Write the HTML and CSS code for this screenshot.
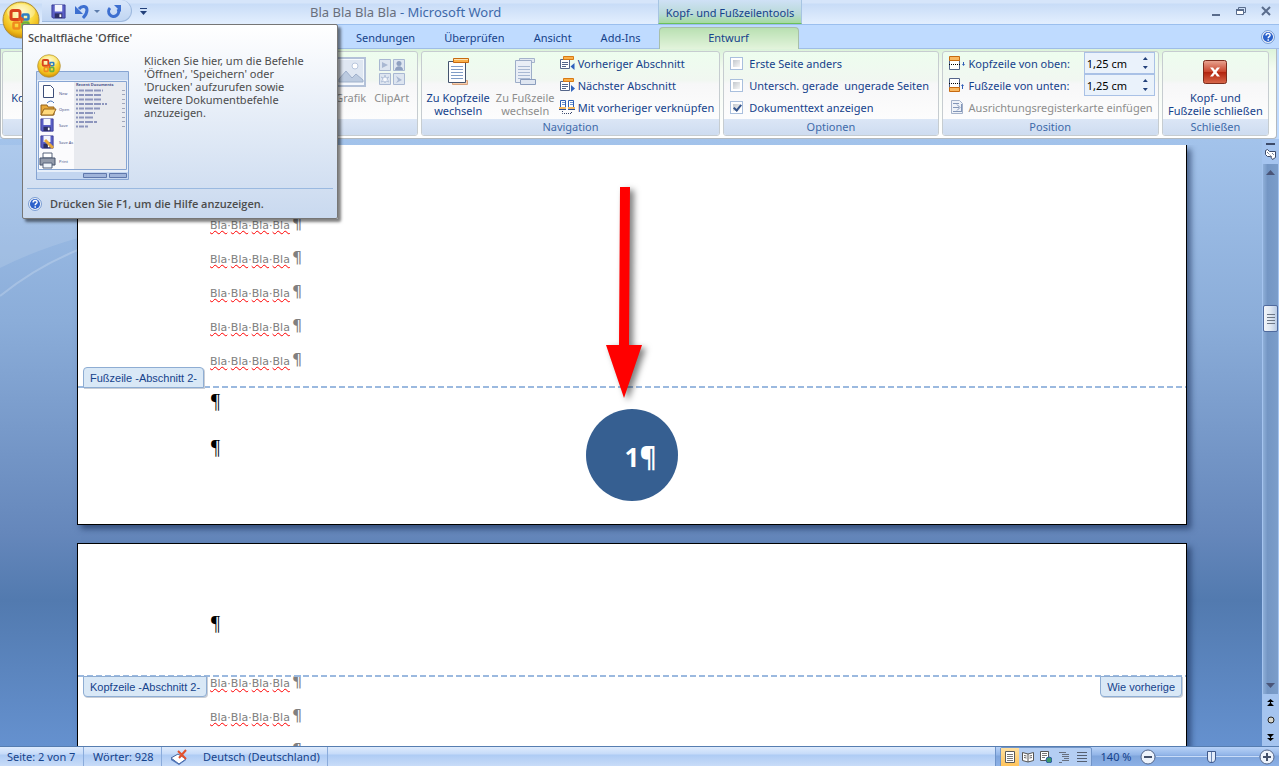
FILE: index.html
```html
<!DOCTYPE html>
<html lang="de">
<head>
    <meta charset="UTF-8">
    <meta name="viewport" content="width=device-width, initial-scale=1.0">
    <title>Bla Bla Bla Bla - Microsoft Word</title>
    <link rel="stylesheet" href="styles.css">
</head>
<body>
    <!-- Gemeinsame Symbole -->
    <svg class="symbols" aria-hidden="true">
        <defs>
            <radialGradient id="gold" cx="50%" cy="30%" r="70%">
                <stop offset="0" stop-color="#fffbd0"/>
                <stop offset="0.45" stop-color="#fbe04a"/>
                <stop offset="0.8" stop-color="#eeb816"/>
                <stop offset="1" stop-color="#c98a08"/>
            </radialGradient>
            <linearGradient id="red" x1="0" y1="0" x2="0" y2="1">
                <stop offset="0" stop-color="#e9a592"/>
                <stop offset="0.5" stop-color="#c8432a"/>
                <stop offset="0.52" stop-color="#b32610"/>
                <stop offset="1" stop-color="#d8694c"/>
            </linearGradient>
            <symbol id="i-office" viewBox="0 0 38 38">
                <circle cx="19" cy="19" r="18" fill="url(#gold)" stroke="#a98a3c"/>
                <ellipse cx="19" cy="11" rx="14" ry="8" fill="#fff" opacity="0.3"/>
                <g fill="none" stroke-width="3">
                    <rect x="9" y="9.500" width="9" height="9" rx="2" stroke="#d8421c"/>
                    <rect x="20.500" y="13.500" width="6" height="5" rx="1" stroke="#2f7fc4" stroke-width="2.500"/>
                    <rect x="11.500" y="21.500" width="6" height="6" rx="1" stroke="#f08a1c" stroke-width="2.500"/>
                    <rect x="20.500" y="21.500" width="6" height="6" rx="1" stroke="#6cb13a" stroke-width="2.500"/>
                </g>
                <path d="M16 18.500h6M19.500 16v6" stroke="#e2571f" stroke-width="2"/>
            </symbol>
            <symbol id="i-save" viewBox="0 0 16 16">
                <path d="M1 1h14v14H2L1 14z" fill="#5a5fc6" stroke="#3a3c94"/>
                <path d="M4 1h8v7H4z" fill="#f4f6fc"/>
                <path d="M4 10h8v5H4z" fill="#2c2f63"/>
                <path d="M9 11h2v3H9z" fill="#fff"/>
            </symbol>
            <symbol id="i-help" viewBox="0 0 16 16">
                <circle cx="8" cy="8" r="7.300" fill="#fff" stroke="#5b86c8"/>
                <circle cx="8" cy="8" r="5.800" fill="#2c62cb"/>
                <path d="M5.800 6.300c0-3 4.600-3 4.600-.3 0 1.700-2.200 1.500-2.200 3.400" fill="none" stroke="#fff" stroke-width="1.600"/>
                <path d="M7.400 10.700h1.700v1.600H7.400z" fill="#fff"/>
            </symbol>
            <symbol id="i-page-head" viewBox="0 0 24 30">
                <path d="M6.500 23.500h15v4h-15z" fill="#f8cfae" stroke="#d8a27c"/>
                <path d="M2.500 4.500h17v21h-17z" fill="#fdfeff" stroke="#44546f"/>
                <path d="M5 9.500h12M5 12.500h12M5 15.500h12M5 18.500h12M5 21.500h12" stroke="#7f9cc6"/>
                <path d="M7.500 1.500h15v4h-15z" fill="#f9b04a" stroke="#c66a10"/>
                <path d="M8 2.500h14" stroke="#fde0b0"/>
            </symbol>
            <symbol id="i-page-foot" viewBox="0 0 24 30">
                <path d="M6.500 1.500h15v4h-15z" fill="#e3e9f2" stroke="#a5b3cb"/>
                <path d="M2.500 3.500h16v22h-16z" fill="#e9eef6" stroke="#9dadc8"/>
                <path d="M5 9.500h12M5 12.500h12M5 15.500h12M5 18.500h12M5 21.500h12" stroke="#a9b9d3"/>
                <path d="M7.500 22.500h15v5h-15z" fill="#dfe6f1" stroke="#8b9dbd"/>
            </symbol>
            <symbol id="i-section" viewBox="0 0 16 16">
                <path d="M1.500 4.500h9v9h-9z" fill="#fff" stroke="#54658a"/>
                <path d="M3 7.500h6M3 9.500h6M3 11.500h4" stroke="#54658a"/>
                <path d="M4.500 1.500h10v3h-10z" fill="#f9b04a" stroke="#d87a14"/>
            </symbol>
            <symbol id="i-prev" viewBox="0 0 16 16">
                <use href="#i-section"/>
                <path d="M15.500 8v7L11.500 11.500z" fill="#2f62bd"/>
            </symbol>
            <symbol id="i-next" viewBox="0 0 16 16">
                <use href="#i-section"/>
                <path d="M12 8v7l4-3.500z" fill="#2f62bd"/>
            </symbol>
            <symbol id="i-link" viewBox="0 0 16 16">
                <path d="M1.500 1.500h5v7h-5zM9.500 1.500h5v7h-5z" fill="#fff" stroke="#2e5fb4"/>
                <path d="M3 3.500h3M3 5.500h3M11 3.500h3M11 5.500h3" stroke="#6f93cf"/>
                <path d="M0 8h7v2H0zM9 8h7v2H9z" fill="#f5b860"/>
                <path d="M0 10.500h7M9 10.500h7" stroke="#2e4f94"/>
                <path d="M3.500 12v2.500h9V12" fill="none" stroke="#39466b" stroke-dasharray="1 1"/>
            </symbol>
            <symbol id="i-top" viewBox="0 0 16 16">
                <path d="M.5 5.500h10v9H.5z" fill="#fff" stroke="#54658a"/>
                <path d="M.5 1.500h10v4H.5z" fill="#f9b860" stroke="#c66a10"/>
                <path d="M0 9.500h12" stroke="#000" stroke-dasharray="1 1"/>
                <path d="M14.500 7v3" stroke="#2d5bb5"/><path d="M13 9h3l-1.500 2z" fill="#2d5bb5"/>
            </symbol>
            <symbol id="i-bottom" viewBox="0 0 16 16">
                <path d="M.5 1.500h10v9H.5z" fill="#fff" stroke="#54658a"/>
                <path d="M.5 10.500h10v4H.5z" fill="#f9b860" stroke="#c66a10"/>
                <path d="M0 6.500h12" stroke="#000" stroke-dasharray="1 1"/>
                <path d="M13.500 8v4" stroke="#2d5bb5"/><path d="M12 9h3l-1.500-2z" fill="#2d5bb5"/>
            </symbol>
            <symbol id="i-align" viewBox="0 0 16 16">
                <path d="M2.500 1.500h8l3 3v10h-11z" fill="#eef2f8" stroke="#a3b1c9"/>
                <path d="M4 4.500h6M4 12.500h8M4 8.500h6M8 5.500l3 3-3 3M12.500 5v8" fill="none" stroke="#8396b8"/>
            </symbol>
            <symbol id="i-close" viewBox="0 0 24 24">
                <rect x=".5" y=".5" width="23" height="23" rx="2" fill="url(#red)" stroke="#7b2c1d"/>
                <path d="M7 7.500h3l2 2.800 2-2.800h3L13.500 12l3.500 4.500h-3l-2-2.800-2 2.800H7l3.500-4.500z" fill="#fff"/>
            </symbol>
            <symbol id="i-picture" viewBox="0 0 30 30">
                <rect x="1" y="1" width="28" height="28" fill="#f4f8fd" stroke="#b3c1d8" stroke-width="2"/>
                <path d="M3 3h24v22H3z" fill="#dfe7f2"/>
                <path d="M3 22l7-8 6 7 4-4 7 6v2H3z" fill="#bccbe0" stroke="#9fb0cb"/>
                <circle cx="19" cy="9" r="3" fill="#fff" stroke="#b9c7dd"/>
            </symbol>
            <symbol id="i-clipart" viewBox="0 0 26 26">
                <g fill="#dde5f0" stroke="#a9b8d2">
                    <path d="M.5.5h11v11H.5zM14.500.5h11v11h-11zM.5 14.500h11v11H.5zM14.500 14.500h11v11h-11z"/>
                </g>
                <path d="M3 3l6 3-6 3z" fill="#a9b8d2"/>
                <circle cx="20" cy="4.500" r="2.500" fill="#8ea0c0"/><path d="M16 11c0-5 8-5 8 0z" fill="#8ea0c0"/>
                <path d="M6 16l1 3 3-1-2 2 2 3-3-1-1 2-1-2-3 1 2-3-2-2 3 1z" fill="#f8fafd" stroke="#b5c3da"/>
                <path d="M17 17l6 4-6 3 2-3z" fill="#a9b8d2"/>
            </symbol>
        </defs>
    </svg>

    <!-- Titelleiste -->
    <header class="titlebar">
        <div class="quick">
            <button aria-label="Speichern"><svg width="15" height="15"><use href="#i-save"/></svg></button>
            <button aria-label="Rückgängig"><svg width="16" height="16" viewBox="0 0 16 16"><path d="M5 5c3-4 8-3 8 1 0 3-1 5-4 8" fill="none" stroke="#3d6fd0" stroke-width="3"/><path d="M1 2v8h8z" fill="#3d6fd0"/></svg></button>
            <button class="quick-drop" aria-label="Rückgängig-Liste"><svg width="6" height="4" viewBox="0 0 6 4"><path d="M0 0h6L3 3z" fill="#5c7cab"/></svg></button>
            <button aria-label="Wiederholen"><svg width="16" height="16" viewBox="0 0 16 16"><path d="M4 4a5 5 0 1 0 8 1" fill="none" stroke="#3d6fd0" stroke-width="3"/><path d="M8 1h7v7z" fill="#3d6fd0"/></svg></button>
        </div>
        <button class="quick-more" aria-label="Symbolleiste anpassen"><svg width="7" height="7" viewBox="0 0 7 7"><path d="M0 0h7v1H0zM0 3h7L3.500 7z" fill="#22407a"/></svg></button>
        <h1 class="title"><span>Bla Bla Bla Bla</span> - Microsoft Word</h1>
        <div class="context-title">Kopf- und Fußzeilentools</div>
        <div class="window-buttons">
            <button aria-label="Minimieren"><svg width="12" height="12" viewBox="0 0 12 12"><path d="M2 9h8v2H2z" fill="#596c8c"/></svg></button>
            <button aria-label="Wiederherstellen"><svg width="12" height="12" viewBox="0 0 12 12"><path d="M3.500 4V2.500h7v5H9" fill="none" stroke="#596c8c"/><path d="M1.500 4.500h7v5h-7z" fill="#fff" stroke="#596c8c"/><path d="M1 4h8v2H1z" fill="#596c8c"/></svg></button>
            <button aria-label="Schließen"><svg width="12" height="12" viewBox="0 0 12 12"><path d="M2 2l8 8M10 2l-8 8" stroke="#596c8c" stroke-width="2"/></svg></button>
        </div>
    </header>

    <!-- Registerkarten -->
    <nav class="tabs">
        <a href="#sendungen">Sendungen</a>
        <a href="#ueberpruefen">Überprüfen</a>
        <a href="#ansicht">Ansicht</a>
        <a href="#addins">Add-Ins</a>
        <a href="#entwurf" class="active">Entwurf</a>
        <button class="help" aria-label="Hilfe"><svg width="14" height="14"><use href="#i-help"/></svg></button>
    </nav>

    <!-- Multifunktionsleiste -->
    <section class="ribbon">
        <div class="group group-insert">
            <div class="group-body">
                <button class="big big-start">Ko</button>
                <button class="big big-picture" disabled><svg width="30" height="30"><use href="#i-picture"/></svg>Grafik</button>
                <button class="big big-clip" disabled><svg width="26" height="30"><use href="#i-clipart"/></svg>ClipArt</button>
            </div>
            <div class="group-name"></div>
        </div>
        <div class="group group-nav">
            <div class="group-body">
                <button class="big"><svg width="24" height="30"><use href="#i-page-head"/></svg>Zu Kopfzeile<br>wechseln</button>
                <button class="big" disabled><svg width="24" height="30"><use href="#i-page-foot"/></svg>Zu Fußzeile<br>wechseln</button>
                <div class="rows">
                    <button class="row"><svg width="16" height="16"><use href="#i-prev"/></svg>Vorheriger Abschnitt</button>
                    <button class="row"><svg width="16" height="16"><use href="#i-next"/></svg>Nächster Abschnitt</button>
                    <button class="row"><svg width="16" height="16"><use href="#i-link"/></svg>Mit vorheriger verknüpfen</button>
                </div>
            </div>
            <div class="group-name">Navigation</div>
        </div>
        <div class="group group-options">
            <div class="group-body">
                <div class="rows">
                    <label class="row"><input type="checkbox">Erste Seite anders</label>
                    <label class="row"><input type="checkbox">Untersch. gerade&nbsp; ungerade Seiten</label>
                    <label class="row"><input type="checkbox" checked>Dokumenttext anzeigen</label>
                </div>
            </div>
            <div class="group-name">Optionen</div>
        </div>
        <div class="group group-position">
            <div class="group-body">
                <div class="rows">
                    <div class="row">
                        <svg width="16" height="16"><use href="#i-top"/></svg>
                        <label for="top">Kopfzeile von oben:</label>
                        <div class="spin">
                            <input id="top" type="text" value="1,25 cm">
                            <div class="spin-buttons"><button class="up" aria-label="Mehr"></button><button class="down" aria-label="Weniger"></button></div>
                        </div>
                    </div>
                    <div class="row">
                        <svg width="16" height="16"><use href="#i-bottom"/></svg>
                        <label for="bottom">Fußzeile von unten:</label>
                        <div class="spin">
                            <input id="bottom" type="text" value="1,25 cm">
                            <div class="spin-buttons"><button class="up" aria-label="Mehr"></button><button class="down" aria-label="Weniger"></button></div>
                        </div>
                    </div>
                    <button class="row" disabled><svg width="16" height="16"><use href="#i-align"/></svg>Ausrichtungsregisterkarte einfügen</button>
                </div>
            </div>
            <div class="group-name">Position</div>
        </div>
        <div class="group group-close">
            <div class="group-body">
                <button class="big"><svg width="24" height="30"><use href="#i-close"/></svg>Kopf- und<br>Fußzeile schließen</button>
            </div>
            <div class="group-name">Schließen</div>
        </div>
    </section>

    <!-- Dokument -->
    <main class="workspace">
        <div class="desk">
            <svg class="swirl" width="78" height="160" viewBox="0 0 78 160" aria-hidden="true">
                <path d="M0 0h78v93Q36 105 0 123z" fill="#fff" opacity="0.12"/>
                <path d="M0 151Q36 122 78 105" fill="none" stroke="#fff" stroke-width="2" opacity="0.2"/>
            </svg>
            <article class="page page-first">
                <div class="text">
                    <p><span>Bla</span>·<span>Bla</span>·<span>Bla</span>·<span>Bla</span><b>¶</b></p>
                    <p><span>Bla</span>·<span>Bla</span>·<span>Bla</span>·<span>Bla</span><b>¶</b></p>
                    <p><span>Bla</span>·<span>Bla</span>·<span>Bla</span>·<span>Bla</span><b>¶</b></p>
                    <p><span>Bla</span>·<span>Bla</span>·<span>Bla</span>·<span>Bla</span><b>¶</b></p>
                    <p><span>Bla</span>·<span>Bla</span>·<span>Bla</span>·<span>Bla</span><b>¶</b></p>
                </div>
                <footer class="page-footer">
                    <div class="mark mark-footer">Fußzeile -Abschnitt 2-</div>
                    <p>¶</p>
                    <p>¶</p>
                    <div class="page-number">1¶</div>
                </footer>
                <svg class="arrow" width="60" height="224" viewBox="0 0 60 224" aria-hidden="true">
                    <path d="M20 2h10l-1 158h13L24 213 6 160h13z" fill="#f00"/>
                </svg>
            </article>
            <article class="page page-second">
                <header class="page-header">
                    <p>¶</p>
                    <div class="mark mark-header">Kopfzeile -Abschnitt 2-</div>
                    <div class="mark mark-header mark-right">Wie vorherige</div>
                </header>
                <div class="text">
                    <p><span>Bla</span>·<span>Bla</span>·<span>Bla</span>·<span>Bla</span><b>¶</b></p>
                    <p><span>Bla</span>·<span>Bla</span>·<span>Bla</span>·<span>Bla</span><b>¶</b></p>
                    <p><b class="last">¶</b></p>
                </div>
            </article>
        </div>
        <div class="scrollbar">
            <div class="split"></div>
            <button class="ruler" aria-label="Lineal"><svg width="13" height="13" viewBox="0 0 13 13"><path d="M1.500 2.500l2-1 2 2h6v6l-3 2-2-3h-3l-2-2z" fill="#fff" stroke="#3c4a69"/><path d="M3 4l5 5M8 5l2 2" stroke="#3c4a69" stroke-dasharray="1 1"/></svg></button>
            <div class="track">
                <button class="up" aria-label="Nach oben"></button>
                <div class="thumb"></div>
                <button class="down" aria-label="Nach unten"></button>
            </div>
            <button class="jump" aria-label="Vorherige Seite"><svg width="7" height="8" viewBox="0 0 7 8"><path d="M3.500 0L7 3H4v1l3 3H0l3-3V3H0z" fill="#000"/></svg></button>
            <button class="jump" aria-label="Browseobjekt"><svg width="8" height="8" viewBox="0 0 8 8"><circle cx="4" cy="4" r="3" fill="#d5d5cd" stroke="#222"/></svg></button>
            <button class="jump" aria-label="Nächste Seite"><svg width="7" height="8" viewBox="0 0 7 8"><path d="M3.500 8L0 5h3V4L0 1h7L4 4v1h3z" fill="#000"/></svg></button>
        </div>
    </main>

    <!-- Statusleiste -->
    <footer class="status">
        <div class="status-item status-page">Seite: 2 von 7</div>
        <div class="status-item status-words">Wörter: 928</div>
        <div class="status-item status-lang">
            <svg width="18" height="16" viewBox="0 0 18 16"><path d="M1 9l7-4 8 5-7 5z" fill="#fff" stroke="#44639c"/><path d="M1 9v2l8 5 7-5v-1l-7 5z" fill="#4f74b8"/><path d="M8 2l8 8M16 1L9 9" stroke="#e2502c" stroke-width="2"/></svg>
            Deutsch (Deutschland)
        </div>
        <div class="status-right">
            <div class="views">
                <button class="on" aria-label="Seitenlayout"><svg width="12" height="12" viewBox="0 0 12 12"><path d="M1.500.5h9v11h-9z" fill="#fff" stroke="#5a5a5a"/><path d="M3 3.500h6M3 5.500h6M3 7.500h6M3 9.500h6" stroke="#777"/></svg></button>
                <button aria-label="Vollbild-Lesemodus"><svg width="12" height="12" viewBox="0 0 12 12"><path d="M.5 1.500L6 3l5.500-1.500v8L6 11 .5 9.500zM6 3v8" fill="#fff" stroke="#555"/><path d="M2 4.500l2.500.5M2 6.500l2.500.5M7.500 5l2.500-.5M7.500 7l2.500-.5" stroke="#666"/></svg></button>
                <button aria-label="Weblayout"><svg width="12" height="12" viewBox="0 0 12 12"><path d="M.5.5h8v9h-8z" fill="#fff" stroke="#555"/><path d="M2 2.500h5M2 4.500h5M2 6.500h3" stroke="#777"/><circle cx="9" cy="9" r="3" fill="#3d9a6a" stroke="#2c5ba8"/></svg></button>
                <button aria-label="Gliederung"><svg width="12" height="12" viewBox="0 0 12 12"><path d="M1 1.500h7M4 3.500h7M4 5.500h7M6 7.500h5M4 9.500h7M1 11.500h3" stroke="#666f80"/></svg></button>
                <button aria-label="Entwurf"><svg width="12" height="12" viewBox="0 0 12 12"><path d="M1 1.500h10M1 4.500h10M1 7.500h10M1 10.500h10" stroke="#555f70"/></svg></button>
            </div>
            <button class="zoom-value">140 %</button>
            <button class="zoom-button" aria-label="Verkleinern"><svg width="16" height="16" viewBox="0 0 16 16"><circle cx="8" cy="8" r="7" fill="#edf3fc" stroke="#54668a"/><path d="M4 7h8v2H4z" fill="#44516b"/></svg></button>
            <input class="zoom" type="range" min="0" max="100" value="54" aria-label="Zoom">
            <button class="zoom-button" aria-label="Vergrößern"><svg width="16" height="16" viewBox="0 0 16 16"><circle cx="8" cy="8" r="7" fill="#edf3fc" stroke="#54668a"/><path d="M4 7h8v2H4zM7 4h2v8H7z" fill="#44516b"/></svg></button>
        </div>
    </footer>

    <!-- Office-Schaltfläche mit QuickInfo -->
    <button class="office" aria-label="Office"><svg width="38" height="38"><use href="#i-office"/></svg></button>
    <aside class="tooltip">
        <h2>Schaltfläche 'Office'</h2>
        <div class="tooltip-body">
            <svg class="preview" width="96" height="127" viewBox="0 0 96 127" aria-hidden="true">
                <path d="M1.500 17.500h92v108h-92z" fill="#e6effa" stroke="#86a4d2"/>
                <path d="M2 18h91v8H2zM2 118h91v7H2z" fill="#c3d6f0"/>
                <path d="M3.500 27.500h88v88h-88z" fill="#fbfbfd" stroke="#86a4d2"/>
                <path d="M39 28h52v87H39z" fill="#e8eaef"/>
                <path d="M8.500 31.500h7l3 3v9h-10z" fill="#fff" stroke="#3c4d78"/>
                <path d="M6 51h6l1 2h6v8H6z" fill="#e8a93c" stroke="#94621a"/><path d="M9 55h12l-3 6H6z" fill="#ffd97c" stroke="#94621a"/><path d="M12 49q4-4 7 0" fill="none" stroke="#4470b8"/>
                <use href="#i-save" x="5" y="64" width="14" height="14"/>
                <use href="#i-save" x="5" y="81" width="14" height="14"/><path d="M10 86l8 8" stroke="#e8a93c" stroke-width="3"/>
                <path d="M8 99h9v5H8z" fill="#fff" stroke="#56627a"/><path d="M5 104h15v7H5z" fill="#939bab" stroke="#47526a"/><path d="M8 109h9v5H8z" fill="#eef3fa" stroke="#56627a"/>
                <g class="preview-text">
                    <text x="24" y="41">New</text><text x="24" y="57">Open</text><text x="24" y="73">Save</text><text x="24" y="90">Save As</text><text x="24" y="109">Print</text>
                    <text class="preview-head" x="41" y="32">Recent Documents</text>
                </g>
                <g stroke="#8d96bd" stroke-width="2" stroke-dasharray="2 1 5 1 8 1 7 1">
                    <path d="M41 36.500h27M41 41h25M41 45.500h25M41 50h31M41 54.500h24M41 59h19M41 63.500h17M41 68h21M41 72.500h12"/>
                </g>
                <path d="M87 36.500h3M87 40.500h3M87 45.500h3M87 49.500h3M87 54.500h3M87 58.500h3M87 63.500h3M87 67.500h3M87 72.500h3" stroke="#a0a6ba"/>
                <path d="M48.500 119.500h23v4h-23zM74.500 119.500h17v4h-17z" fill="#9fb4da" stroke="#5f78ac"/>
                <use href="#i-office" x="2" y="0" width="24" height="24"/>
            </svg>
            <p>Klicken Sie hier, um die Befehle<br>'Öffnen', 'Speichern' oder<br>'Drucken' aufzurufen sowie<br>weitere Dokumentbefehle<br>anzuzeigen.</p>
        </div>
        <div class="tooltip-help">
            <svg width="14" height="14"><use href="#i-help"/></svg>
            <strong>Drücken Sie F1, um die Hilfe anzuzeigen.</strong>
        </div>
    </aside>
</body>
</html>
```
FILE: styles.css
```css
* {
    box-sizing: border-box;
}

body {
    margin: 0;
    height: 100vh;
    display: flex;
    flex-direction: column;
    overflow: hidden;
    position: relative;
    background: #bfdbff;
    font-family: "Noto Sans", sans-serif;
    font-size: 11px;
    line-height: 13px;
    color: #15428b;
}

button {
    margin: 0;
    padding: 0;
    border: none;
    background: none;
    font: inherit;
    color: inherit;
}

p {
    margin: 0;
}

svg {
    display: block;
    flex: none;
}

.symbols {
    position: absolute;
    width: 0;
    height: 0;
}

/* Titelleiste */
.titlebar {
    flex: none;
    display: flex;
    align-items: stretch;
    height: 25px;
    padding-left: 42px;
    border-bottom: 1px solid #9bbfee;
    background: linear-gradient(#d6e5fa 0, #d6e5fa 3px, #c8dcf7 4px, #e2eefe 23px);
}

.quick {
    display: flex;
    align-items: center;
    gap: 8px;
    width: 90px;
    height: 22px;
    padding: 2px 0 0 9px;
    border: 1px solid #9db9de;
    border-top: none;
    border-left: none;
    border-radius: 0 11px 11px 0;
    background: linear-gradient(#d9e7fb, #c0d5f2);
}

.quick-drop {
    margin: 0 -2px 0 -4px;
}

.quick-more {
    width: 22px;
    padding: 0 0 2px 8px;
}

.title {
    width: 504px;
    margin: 0;
    padding-left: 156px;
    font-size: 13px;
    line-height: 25px;
    font-weight: normal;
    color: #3e6aaa;
}

.title span {
    color: #696f7c;
}

.context-title {
    width: 144px;
    border: 1px solid #a6c4e2;
    border-width: 0 1px;
    border-bottom: 1px solid #6cc05a;
    background: linear-gradient(#cfe1f6, #b9dad8 60%, #a5dba0);
    line-height: 26px;
    text-align: center;
}

.window-buttons {
    display: flex;
    gap: 13px;
    margin-left: auto;
    padding: 0 7px 2px 0;
}

/* Registerkarten */
.tabs {
    flex: none;
    display: flex;
    align-items: flex-end;
    gap: 1px;
    height: 24px;
    padding: 0 4px 0 342px;
    border-bottom: 1px solid #9fbde6;
}

.tabs a {
    padding: 0 14px;
    line-height: 20px;
    color: inherit;
    text-decoration: none;
}

.tabs .active {
    width: 140px;
    height: 22px;
    margin: 0 auto -1px 3px;
    border: 1px solid #a8bfa8;
    border-bottom: none;
    border-radius: 4px 4px 0 0;
    background: linear-gradient(#b9e0b2, #e3f4dc);
    text-align: center;
}

.help {
    align-self: center;
}

/* Multifunktionsleiste */
.ribbon {
    flex: none;
    display: flex;
    gap: 3px;
    height: 90px;
    margin: 0 2px 0 0;
    padding: 2px 7px 2px 1px;
    border: 1px solid #b3b9bf;
    border-top: none;
    border-radius: 0 0 4px 4px;
    background: linear-gradient(#dcf3da, #f4fbf2 20px, #fff);
}

.group {
    display: flex;
    flex-direction: column;
    border: 1px solid #c6ccd0;
    border-radius: 3px;
    background: linear-gradient(#edfdee, #f1f7f1 28px, #f7f7f8 32px, #fff);
    overflow: hidden;
}

.group-insert { flex: 417 1 0; }
.group-nav { flex: 300 1 0; }
.group-options { flex: 215 1 0; }
.group-position { flex: 217 1 0; }
.group-close { flex: 106 1 0; }

.group-body {
    flex: 1;
    display: flex;
    padding: 0 3px;
}

.group-name {
    flex: none;
    height: 16px;
    background: linear-gradient(#dbe6f6, #cedcf0);
    line-height: 16px;
    text-align: center;
    color: #3e6aaa;
}

.big {
    display: flex;
    flex-direction: column;
    align-items: center;
    width: 67px;
    padding-top: 5px;
    white-space: nowrap;
}

.big svg {
    margin-bottom: 4px;
}

.big:disabled,
.row:disabled {
    color: #8d8d8d;
}

.big-start {
    width: 24px;
    padding-top: 39px;
}

.big-picture {
    width: 38px;
    margin-left: auto;
}

.big-clip {
    width: 44px;
}

.group-close .big {
    width: 100%;
}

.rows {
    flex: 1;
    display: flex;
    flex-direction: column;
}

.row {
    display: flex;
    align-items: center;
    gap: 3px;
    height: 22px;
    white-space: nowrap;
}

.group-options .row {
    gap: 6px;
    padding-left: 3px;
}

.group-position .row {
    gap: 4px;
    padding-left: 3px;
}

input[type="checkbox"] {
    appearance: none;
    width: 13px;
    height: 13px;
    margin: 0;
    padding: 2px;
    border: 1px solid #a9bfdd;
    background: linear-gradient(135deg, #c3c8ce, #f7f7f7) content-box, #fff;
}

input[type="checkbox"]:checked {
    position: relative;
}

input[type="checkbox"]:checked::after {
    content: "";
    position: absolute;
    left: 4px;
    top: 1px;
    width: 3px;
    height: 6px;
    border: solid #35558c;
    border-width: 0 2px 2px 0;
    transform: rotate(40deg);
}

.spin {
    display: flex;
    width: 71px;
    height: 22px;
    margin-left: auto;
    border: 1px solid #a9c1e6;
    background: #eaf2fb;
}

.spin input {
    flex: 1;
    width: 40px;
    min-width: 0;
    padding: 0 0 0 2px;
    border: none;
    background: none;
    font: inherit;
    color: #000;
}

.spin-buttons {
    display: flex;
    flex-direction: column;
    justify-content: center;
    gap: 6px;
    padding-right: 6px;
}

.up,
.down {
    width: 5px;
    height: 3px;
    background: #22407a;
    clip-path: polygon(50% 0, 100% 100%, 0 100%);
}

.down {
    clip-path: polygon(0 0, 100% 0, 50% 100%);
}

/* Dokument */
.workspace {
    flex: 1;
    min-height: 0;
    display: flex;
    padding-top: 6px;
    background: linear-gradient(#a3c3eb, #8badd9 30%, #6587bb 65%, #527aaf 76%, #6591cf);
}

.desk {
    flex: 1;
    position: relative;
    overflow: hidden;
    padding: 0 75px 0 77px;
}

.swirl {
    position: absolute;
    left: 0;
    top: 0;
}

.page {
    position: relative;
    border: 1px solid #000;
    background: #fff;
    box-shadow: 4px 4px 6px rgba(20, 40, 80, 0.6);
}

.page-first {
    padding-top: 64px;
    border-top: none;
}

.page-second {
    margin-top: 18px;
}

.text {
    padding-left: 132px;
}

.text p {
    height: 34px;
    font-family: "DejaVu Sans", sans-serif;
    line-height: 34px;
    color: #808080;
}

.text span {
    text-decoration: underline wavy #f00 1px;
    text-underline-offset: 1px;
    text-decoration-skip-ink: none;
}

.text b {
    padding-left: 2px;
    font-size: 16px;
    line-height: 20px;
    font-weight: normal;
}

.text .last {
    padding-left: 82px;
}

.page-footer {
    position: relative;
    height: 138px;
    margin-top: 7px;
    padding-left: 133px;
    background: repeating-linear-gradient(90deg, #9bb9df 0 6px, transparent 6px 9px) top / 100% 2px no-repeat;
}

.page-footer p,
.page-header p {
    height: 46px;
    font-family: "Liberation Serif", serif;
    font-size: 20px;
    line-height: 30px;
    color: #000;
}

.page-header {
    position: relative;
    height: 133px;
    padding: 64px 0 0 133px;
    background: repeating-linear-gradient(90deg, #9bb9df 0 6px, transparent 6px 9px) bottom / 100% 2px no-repeat;
}

.page-second .text {
    margin-top: -10px;
}

.mark {
    position: absolute;
    left: 5px;
    height: 21px;
    padding: 0 6px;
    border: 1px solid #8eadd3;
    background: #d9e8f6;
    font-family: "Liberation Sans", sans-serif;
    line-height: 20px;
    white-space: nowrap;
    box-shadow: 1px 1px 0 #c9ced6;
}

.mark-footer {
    top: -19px;
    border-radius: 4px 4px 0 0;
}

.mark-header {
    top: 132px;
    border-radius: 0 0 4px 4px;
}

.mark-right {
    left: auto;
    right: 4px;
}

.page-number {
    position: absolute;
    left: 508px;
    top: 23px;
    width: 92px;
    height: 92px;
    padding-left: 17px;
    border-radius: 50%;
    background: #365f91;
    font-family: "Open Sans", sans-serif;
    font-size: 26px;
    font-weight: bold;
    line-height: 96px;
    text-align: center;
    color: #fff;
}

.arrow {
    position: absolute;
    left: 522px;
    top: 40px;
    filter: drop-shadow(4px 3px 3px rgba(0, 0, 0, 0.5));
}

/* Bildlaufleiste */
.scrollbar {
    display: flex;
    flex-direction: column;
    align-items: center;
    width: 17px;
    margin-top: -6px;
    padding: 4px 0 1px;
    background: #a5c4ef;
}

.split {
    width: 9px;
    height: 2px;
    background: #3c4a69;
}

.ruler {
    padding: 3px 0;
}

.track {
    flex: 1;
    display: flex;
    flex-direction: column;
    align-items: center;
    width: 15px;
    padding: 6px 0;
    background: linear-gradient(90deg, #8fafd8, #7496c4 30%, #7b9dca);
}

.track .up,
.track .down {
    width: 9px;
    height: 5px;
    background: #4a5578;
}

.thumb {
    width: 15px;
    height: 27px;
    margin: 130px 0 auto;
    border: 1px solid #4f6a9e;
    border-radius: 2px;
    background:
        repeating-linear-gradient(#6c7685 0 1px, transparent 1px 3px) center / 8px 10px no-repeat,
        linear-gradient(90deg, #f2f5f9, #dfe7f2 50%, #b9cbe4);
}

.jump {
    height: 17px;
}

/* Statusleiste */
.status {
    flex: none;
    display: flex;
    align-items: stretch;
    height: 20px;
    border-top: 1px solid #567db0;
    background: linear-gradient(#dfebfc, #c6dbf9 7px, #aecbf4 8px, #c8dcf8);
    line-height: 20px;
    white-space: nowrap;
}

.status-item {
    display: flex;
    align-items: center;
    border-right: 1px solid #8aabdb;
    padding-left: 7px;
}

.status-page { width: 84px; }

.status-words {
    width: 78px;
    padding-left: 9px;
}

.status-lang {
    gap: 15px;
    width: 166px;
    padding-left: 8px;
}

.status-right {
    display: flex;
    align-items: center;
    width: 284px;
    margin-left: auto;
    padding: 0 4px;
    border-left: 1px solid #6f94c9;
    background: linear-gradient(#b8d2f7, #92b5e8 8px, #7fa5dc 9px, #8db1e6);
}

.views {
    display: flex;
    border: 1px solid #7295c8;
    border-radius: 2px;
    background: #b4cef3;
}

.views button {
    padding: 3px;
}

.views .on {
    background: linear-gradient(#ffe0a0, #ffc45c);
}

.zoom-value {
    width: 48px;
}

.zoom {
    appearance: none;
    flex: 1;
    min-width: 0;
    height: 16px;
    margin: 0;
    background: linear-gradient(#c9dcf8, #c9dcf8) center / 100% 1px no-repeat;
}

.zoom::-webkit-slider-thumb {
    appearance: none;
    width: 9px;
    height: 12px;
    border: 1px solid #40598a;
    border-radius: 1px 1px 5px 5px;
    background: linear-gradient(90deg, #e4edfa 3px, #6c87b5 3px, #6c87b5 4px, #e4edfa 4px);
}

/* Office-Schaltfläche */
.office {
    position: absolute;
    left: 2px;
    top: 1px;
}

.tooltip {
    position: absolute;
    left: 22px;
    top: 24px;
    width: 316px;
    height: 195px;
    display: flex;
    flex-direction: column;
    padding: 6px 4px 0;
    border: 1px solid #767676;
    border-radius: 2px;
    background: linear-gradient(#fff, #c9d9ef);
    box-shadow: 3px 3px 3px rgba(0, 0, 0, 0.5);
    color: #4c4c4c;
}

.tooltip h2 {
    margin: 0 1px;
    font-size: 11px;
}

.tooltip h2,
.tooltip strong {
    font-family: "Open Sans", sans-serif;
    font-weight: 600;
}

.tooltip-body {
    flex: 1;
    display: flex;
    gap: 13px;
    padding: 10px 8px 0;
}

.tooltip-body p {
    white-space: nowrap;
}

.preview-text {
    font-size: 4px;
    fill: #4c568c;
}

.preview-head {
    font-weight: bold;
}

.tooltip-help {
    display: flex;
    align-items: center;
    gap: 8px;
    height: 30px;
    padding-left: 1px;
    border-top: 1px solid #9ab9e0;
}
```
